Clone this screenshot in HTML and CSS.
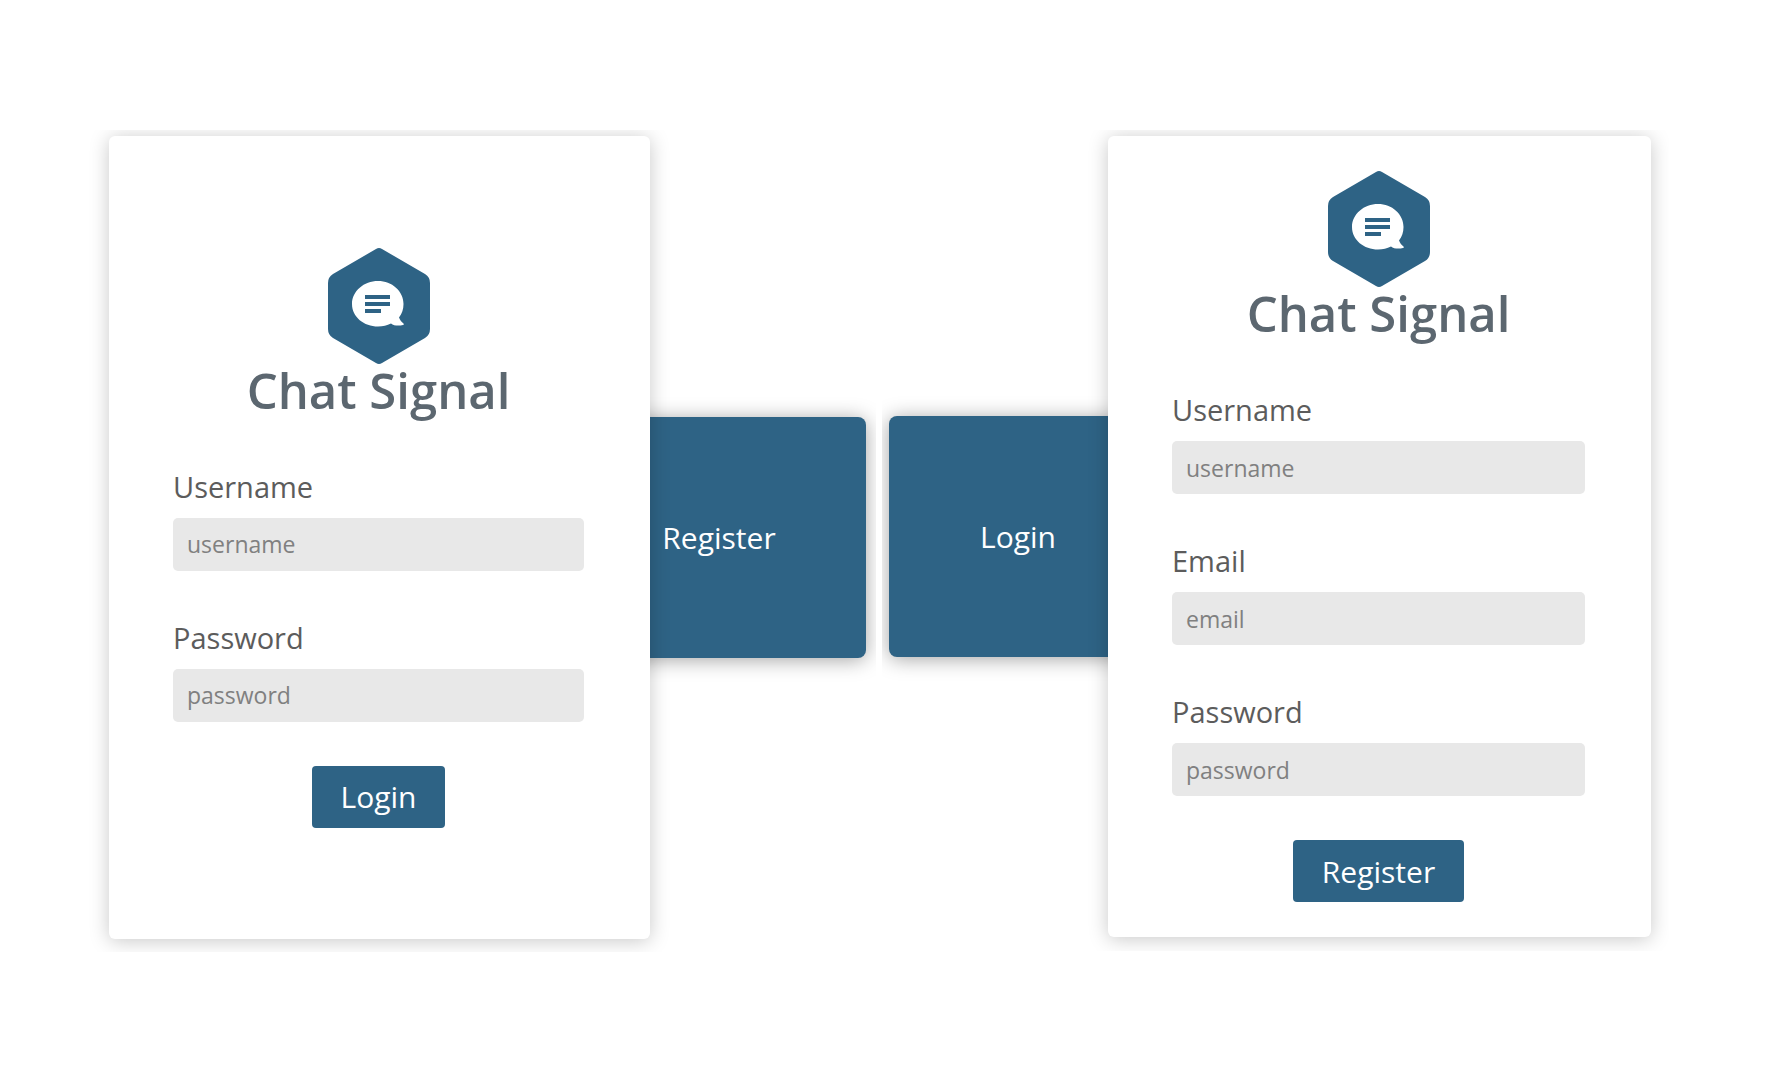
FILE: index.html
```html
<!DOCTYPE html>
<html lang="en">
<head>
<meta charset="utf-8">
<meta name="viewport" content="width=device-width, initial-scale=1">
<title>Chat Signal</title>
<link rel="stylesheet" href="styles.css">
</head>
<body>
<svg class="sprite" aria-hidden="true">
  <symbol id="mark" viewBox="0 0 102 116">
    <path fill="#2e6385" d="M48 1Q51-1 54 1L97 26Q102 29 102 35V81Q102 87 97 90L54 115Q51 117 48 115L5 90Q0 87 0 81V35Q0 29 5 26Z"/>
    <path fill="#fff" d="M50 33C64 33 75.500 43 75.500 56C75.500 61 74 66 71 69.500C72 72 73.500 74 75.500 75.500C76 76 76 77 75 77C71 78 66 78 63 75.500C59 77.500 55 78.500 50 78.500C36 78.500 24 69 24 56C24 43 36 33 50 33Z"/>
    <path fill="#2e6385" d="M37 47H62V51H37ZM37 54H62V58H37ZM37 61H53V65H37Z"/>
  </symbol>
</svg>
<main class="page">
  <section class="scene scene-login">
    <form class="card">
      <h1 class="logo">
        <svg class="logo-mark" aria-hidden="true"><use href="#mark"/></svg>
        <span class="logo-name">Chat Signal</span>
      </h1>
      <div class="fields">
        <div class="field">
          <label for="login-username">Username</label>
          <input id="login-username" type="text" placeholder="username">
        </div>
        <div class="field">
          <label for="login-password">Password</label>
          <input id="login-password" type="password" placeholder="password">
        </div>
      </div>
      <button class="submit" type="submit">Login</button>
    </form>
    <button class="tab" type="button">Register</button>
  </section>
  <section class="scene scene-register">
    <button class="tab" type="button">Login</button>
    <form class="card">
      <h1 class="logo">
        <svg class="logo-mark" aria-hidden="true"><use href="#mark"/></svg>
        <span class="logo-name">Chat Signal</span>
      </h1>
      <div class="fields">
        <div class="field">
          <label for="register-username">Username</label>
          <input id="register-username" type="text" placeholder="username">
        </div>
        <div class="field">
          <label for="register-email">Email</label>
          <input id="register-email" type="email" placeholder="email">
        </div>
        <div class="field">
          <label for="register-password">Password</label>
          <input id="register-password" type="password" placeholder="password">
        </div>
      </div>
      <button class="submit" type="submit">Register</button>
    </form>
  </section>
</main>
</body>
</html>
```

FILE: styles.css
```css
* {
  box-sizing: border-box;
}

body {
  margin: 0;
  background: #fff;
  color: #5c5c5c;
  font-family: "Open Sans", sans-serif;
}

button,
input {
  border: 0;
  font-family: inherit;
}

.sprite {
  position: absolute;
  width: 0;
  height: 0;
}

.page {
  display: grid;
  grid-template-columns: 1fr 1fr;
  align-items: start;
  gap: 6px;
  padding: 130px 109px 130px 89px;
}

.scene {
  display: flex;
  align-items: center;
  overflow: hidden;
}

.scene-login {
  padding: 6px 10px 13px 20px;
}

.scene-register {
  padding: 6px 18px 14px 7px;
}

.card {
  z-index: 1;
  display: flex;
  flex: 1;
  flex-direction: column;
  align-items: center;
  justify-content: center;
  min-width: 0;
  min-height: 803px;
  padding: 32px 66px 32px 64px;
  border-radius: 6px;
  background: #fff;
  box-shadow: 0 2px 20px rgba(0, 0, 0, 0.22);
}

.scene-register .card {
  min-height: 801px;
}

.logo {
  display: flex;
  flex-direction: column;
  align-items: center;
  margin: 0 0 51px;
}

.logo-mark {
  width: 102px;
  height: 116px;
}

.logo-name {
  color: #5c6770;
  font-size: 49px;
  font-weight: 600;
  line-height: 52px;
}

.fields {
  display: grid;
  gap: 47px;
  width: 100%;
}

.field {
  display: grid;
  gap: 11px;
}

.field label {
  font-size: 29px;
  line-height: 40px;
}

.field input {
  width: 100%;
  height: 53px;
  padding: 0 14px;
  border-radius: 5px;
  background: #e8e8e8;
  color: #5c5c5c;
  font-size: 23px;
}

.field input::placeholder {
  color: #808080;
}

.submit {
  height: 62px;
  margin-top: 44px;
  padding: 0 29px;
  border-radius: 4px;
  background: #2e6385;
  color: #fff;
  font-size: 30px;
}

.tab {
  height: 241px;
  border-radius: 8px;
  background: #2e6385;
  box-shadow: 0 2px 20px rgba(0, 0, 0, 0.36);
  color: #fff;
  font-size: 30px;
}

.scene-login .tab {
  width: 294px;
  margin-left: -78px;
}

.scene-register .tab {
  width: 258px;
  margin-right: -39px;
}
```
